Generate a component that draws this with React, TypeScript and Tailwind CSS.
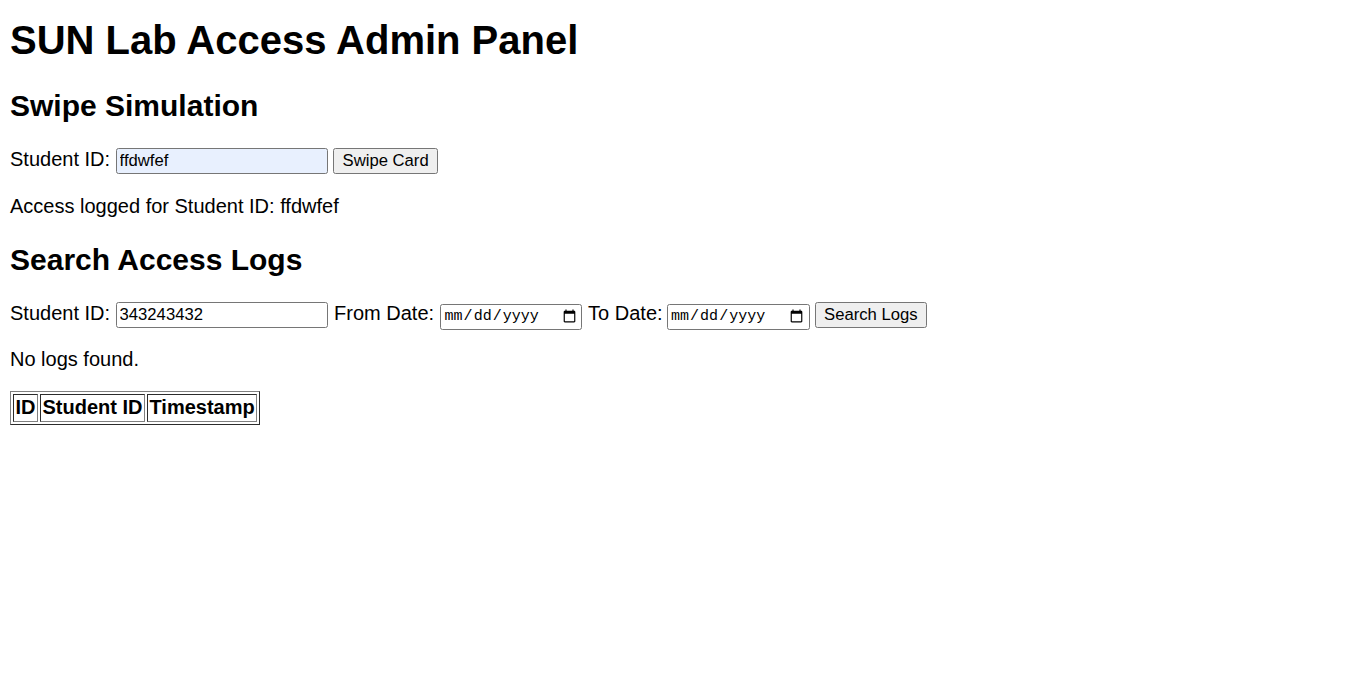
import React from "react";

export default function App() {
  const font = "[font-family:'Liberation_Sans',Arial,sans-serif]";
  const cell = "border border-[#808080] [border-style:inset] px-[1.5px] py-[1.5px] font-bold";
  return (
    <div className={`min-h-screen bg-white text-black px-[10px] pb-[10px] pt-[1px] ${font}`}>
      <h1 className="mt-[16px] text-[40px] leading-[46px] font-bold">SUN Lab Access Admin Panel</h1>

      <h2 className="mt-[26px] text-[30px] leading-[34.5px] font-bold">Swipe Simulation</h2>
      <div className="mt-[24.5px] flex items-baseline text-[20px] leading-[23px]">
        <span>Student ID:</span>
        <input
          type="text"
          defaultValue="ffdwfef"
          className="ml-[6px] w-[212px] h-[26px] border border-[#767676] rounded-[2.5px] px-[2.5px] bg-[#e8f0fe] text-[16.67px] text-black outline-none"
        />
        <button className="ml-[5px] h-[26px] px-[8.5px] bg-[#efefef] border border-[#767676] rounded-[2.5px] text-[16.67px] leading-[20px]">
          Swipe Card
        </button>
      </div>
      <p className="mt-[20.5px] text-[20px] leading-[23px]">Access logged for Student ID: ffdwfef</p>

      <h2 className="mt-[25px] text-[30px] leading-[34.5px] font-bold">Search Access Logs</h2>
      <div className="mt-[25px] flex items-baseline text-[20px] leading-[23px]">
        <span>Student ID:</span>
        <input
          type="text"
          defaultValue="343243432"
          className="ml-[6px] w-[212px] h-[26px] border border-[#767676] rounded-[2.5px] px-[2.5px] bg-white text-[16.67px] text-black outline-none"
        />
        <span className="ml-[6px]">From Date:</span>
        <input
          type="date"
          className="ml-[6px] w-[142px] h-[26px] border border-[#767676] rounded-[2.5px] px-[2.5px] bg-white text-[15px] [font-family:'Liberation_Mono',monospace] text-black outline-none"
        />
        <span className="ml-[6px]">To Date:</span>
        <input
          type="date"
          className="ml-[4px] w-[143px] h-[26px] border border-[#767676] rounded-[2.5px] px-[2.5px] bg-white text-[15px] [font-family:'Liberation_Mono',monospace] text-black outline-none"
        />
        <button className="ml-[5px] h-[26px] px-[8.5px] bg-[#efefef] border border-[#767676] rounded-[2.5px] text-[16.67px] leading-[20px]">
          Search Logs
        </button>
      </div>
      <p className="mt-[18px] text-[20px] leading-[23px]">No logs found.</p>

      <table className="mt-[20px] border-separate [border-spacing:2px] border border-[#808080] [border-style:outset] text-[20px] leading-[23px]">
        <thead>
          <tr>
            <th className={cell}>ID</th>
            <th className={cell}>Student ID</th>
            <th className={cell}>Timestamp</th>
          </tr>
        </thead>
        <tbody></tbody>
      </table>
    </div>
  );
}
